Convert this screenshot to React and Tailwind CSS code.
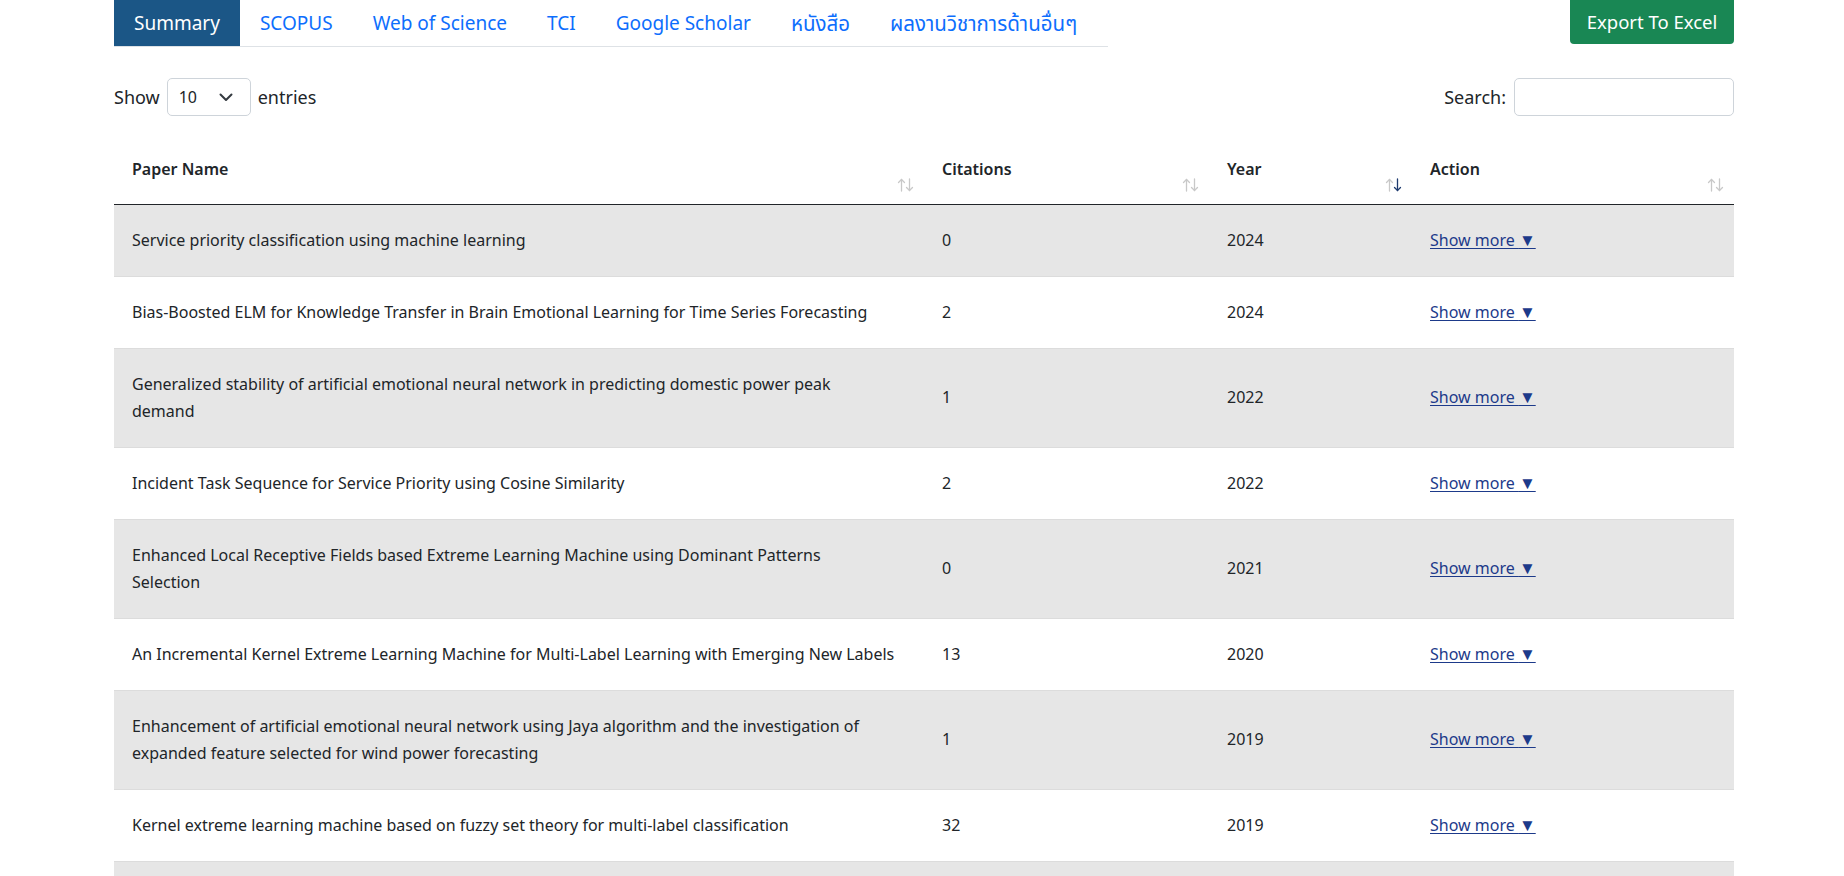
import { useState } from 'react';

const papers = [
  { name: 'Service priority classification using machine learning', citations: 0, year: 2024 },
  { name: 'Bias-Boosted ELM for Knowledge Transfer in Brain Emotional Learning for Time Series Forecasting', citations: 2, year: 2024 },
  { name: 'Generalized stability of artificial emotional neural network in predicting domestic power peak\ndemand', citations: 1, year: 2022 },
  { name: 'Incident Task Sequence for Service Priority using Cosine Similarity', citations: 2, year: 2022 },
  { name: 'Enhanced Local Receptive Fields based Extreme Learning Machine using Dominant Patterns\nSelection', citations: 0, year: 2021 },
  { name: 'An Incremental Kernel Extreme Learning Machine for Multi-Label Learning with Emerging New Labels', citations: 13, year: 2020 },
  { name: 'Enhancement of artificial emotional neural network using Jaya algorithm and the investigation of\nexpanded feature selected for wind power forecasting', citations: 1, year: 2019 },
  { name: 'Kernel extreme learning machine based on fuzzy set theory for multi-label classification', citations: 32, year: 2019 },
  { name: 'Multi-label classification using extreme learning machine', citations: 5, year: 2018 },
];

const tabs = [
  { label: 'Summary' },
  { label: 'SCOPUS' },
  { label: 'Web of Science' },
  { label: 'TCI' },
  { label: 'Google Scholar' },
  { label: 'หนังสือ', thai: true },
  { label: 'ผลงานวิชาการด้านอื่นๆ', thai: true },
];

function SortIcon({ active }) {
  return (
    <svg width="17" height="14" viewBox="0 0 17 14" fill="none" strokeWidth="1.3" strokeLinecap="round" strokeLinejoin="round">
      <g stroke="#c8c8c8">
        <path d="M4.5 13V1.5" />
        <path d="M1.5 4.5l3-3 3 3" />
      </g>
      <g stroke={active ? '#1d3a6e' : '#c8c8c8'}>
        <path d="M12.5 1v11.5" />
        <path d="M9.5 9.5l3 3 3-3" />
      </g>
    </svg>
  );
}

function HeaderCell({ label, width, active }) {
  return (
    <th className={`${width} h-[73px] p-0 align-top text-left font-semibold`}>
      <div className="flex h-full justify-between pl-[18px] pr-[10px]">
        <span className="pt-[27px] text-[16px] leading-[22px]">{label}</span>
        <span className="self-end pb-[12px]">
          <SortIcon active={active} />
        </span>
      </div>
    </th>
  );
}

export default function App() {
  const [active, setActive] = useState('Summary');
  const [perPage, setPerPage] = useState('10');

  return (
    <div className="min-h-screen bg-white pl-[114px] pr-[110px] text-[#212529] font-['Noto_Sans','Noto_Sans_Thai','Liberation_Sans',sans-serif]">
      <div className="flex items-start justify-between">
        <ul className="flex border-b border-[#dee2e6] w-[994px]">
          {tabs.map(tab => (
            <li key={tab.label}>
              <button
                onClick={() => setActive(tab.label)}
                className={`h-[46px] px-[20px] ${tab.thai ? 'text-[20.5px]' : 'text-[19px]'} ${
                  active === tab.label ? 'bg-[#1b5686] text-white' : 'text-[#0d6efd]'
                }`}
              >
                {tab.label}
              </button>
            </li>
          ))}
        </ul>
        <button className="h-[44px] w-[164px] rounded-b-[4px] bg-[#198754] text-[18.5px] text-white">
          Export To Excel
        </button>
      </div>

      <div className="mt-[31px] flex items-center justify-between text-[18px]">
        <div className="flex items-center gap-[7px]">
          <span>Show</span>
          <div className="relative">
            <select
              value={perPage}
              onChange={(e) => setPerPage(e.target.value)}
              className="h-[38px] w-[84px] appearance-none rounded-[5px] border border-[#ced4da] bg-white pl-[11px] text-[16px]"
            >
              <option>10</option>
              <option>25</option>
              <option>50</option>
              <option>100</option>
            </select>
            <svg className="pointer-events-none absolute right-[18px] top-[15px]" width="14" height="9" viewBox="0 0 14 9" fill="none">
              <path d="M1.5 1.5l5.5 5.5 5.5-5.5" stroke="#343a40" strokeWidth="2" strokeLinecap="round" strokeLinejoin="round" />
            </svg>
          </div>
          <span>entries</span>
        </div>
        <label className="flex items-center gap-[8px]">
          <span>Search:</span>
          <input type="text" className="h-[38px] w-[220px] rounded-[5px] border border-[#ced4da] bg-white px-2" />
        </label>
      </div>

      <table className="mt-[15px] w-full border-collapse">
        <thead>
          <tr className="border-b border-[#212529]">
            <HeaderCell label="Paper Name" width="w-[810px]" />
            <HeaderCell label="Citations" width="w-[285px]" />
            <HeaderCell label="Year" width="w-[203px]" active />
            <HeaderCell label="Action" />
          </tr>
        </thead>
        <tbody className="text-[16px] leading-[27px]">
          {papers.map((p, i) => (
            <tr key={p.name} className={`border-b border-[#dcdcdc] ${i % 2 === 0 ? 'bg-[#e6e6e6]' : 'bg-white'}`}>
              <td className="whitespace-pre-line py-[22px] pl-[18px] pr-[18px]">{p.name}</td>
              <td className="py-[22px] pl-[18px]">{p.citations}</td>
              <td className="py-[22px] pl-[18px]">{p.year}</td>
              <td className="py-[22px] pl-[18px]">
                <a href="#" className="text-[#1d3a8a] underline underline-offset-2 leading-[27px]">
                  Show more <span className="text-[17px] leading-[0]">▼</span>
                </a>
              </td>
            </tr>
          ))}
        </tbody>
      </table>
    </div>
  );
}
